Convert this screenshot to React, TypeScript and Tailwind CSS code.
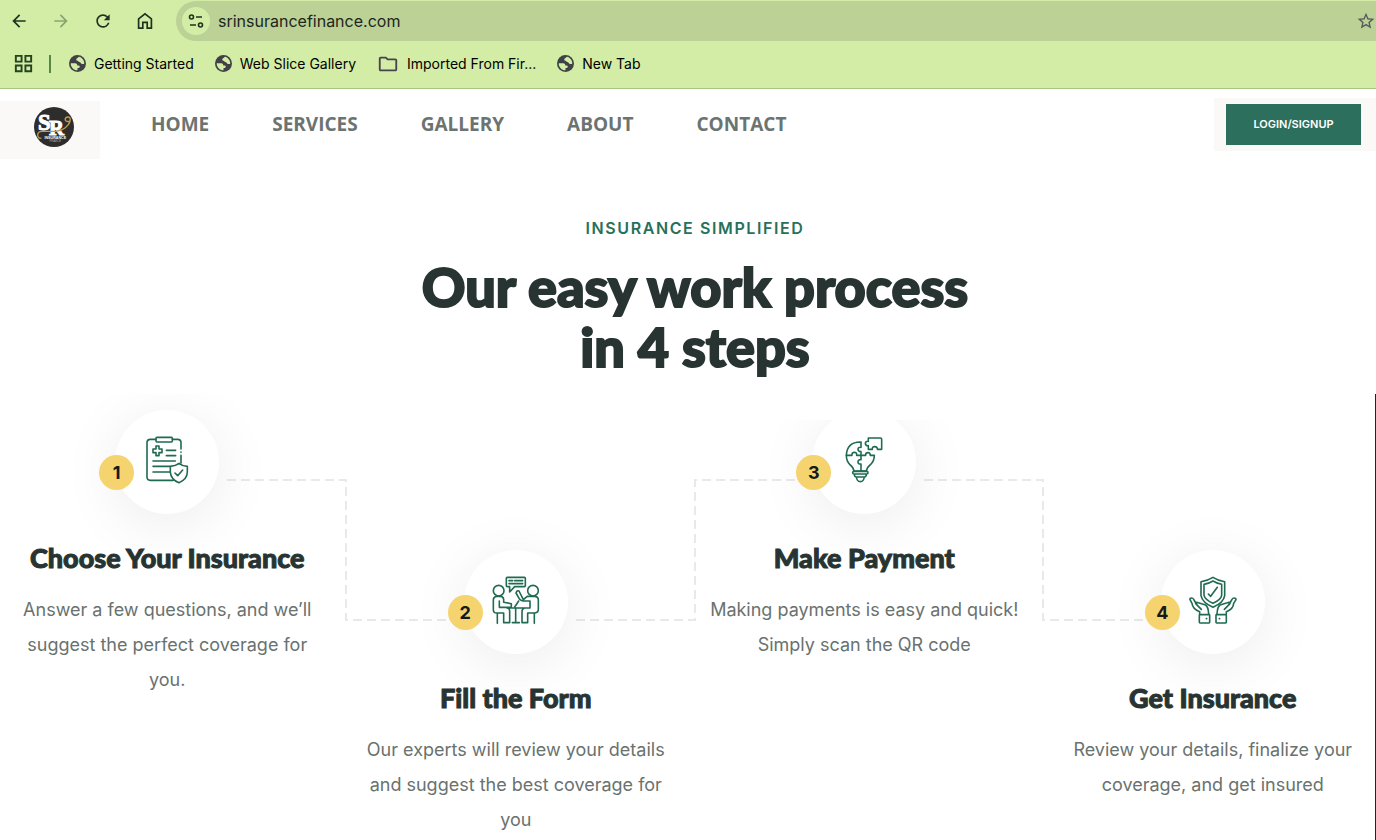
import type { ReactNode } from "react";
import {
  MdArrowBack,
  MdArrowForward,
  MdOutlineFolder,
  MdOutlineGridView,
  MdRefresh,
  MdStarBorder,
} from "react-icons/md";

type Step = {
  number: number;
  title: string;
  text: string;
  icon: ReactNode;
};

const bookmarks = [
  { label: "Getting Started", folder: false },
  { label: "Web Slice Gallery", folder: false },
  { label: "Imported From Fir...", folder: true },
  { label: "New Tab", folder: false },
];

const links = ["HOME", "SERVICES", "GALLERY", "ABOUT", "CONTACT"];

function StepIcon({ viewBox, children }: { viewBox: string; children: ReactNode }) {
  return (
    <svg
      viewBox={viewBox}
      className="size-13 text-[#1f6a51]"
      fill="none"
      stroke="currentColor"
      strokeWidth="4.8"
      strokeLinecap="round"
      strokeLinejoin="round"
      aria-hidden="true"
    >
      {children}
    </svg>
  );
}

function PolicyIcon() {
  return (
    <StepIcon viewBox="184 141 156 156">
      <path d="M228 151H212Q202 151 202 161V264Q202 274 212 274H281" />
      <path d="M278 151H294Q304 151 304 161V180M304 189V190M304 199V222" />
      <rect x="229" y="145" width="49" height="14" rx="3" />
      <path d="M229 171h9v9h9v11h-9v9h-9v-9h-9v-11h9z" />
      <path d="M260 184H288M260 200H288M220 216H287M220 232H270M220 249H270" />
      <path d="M298 223Q309 232 323 232V250Q322 272 298 281Q274 272 272 250V232Q288 231 298 223Z" />
      <path d="M286 252L294 260L309 243" />
    </StepIcon>
  );
}

function MeetingIcon() {
  return (
    <StepIcon viewBox="181 139 156 156">
      <circle cx="207" cy="183" r="16" />
      <circle cx="310" cy="183" r="16" />
      <path d="M233 143H284Q287 143 287 146V168Q287 171 284 171H255L240 187V171H233Q230 171 230 168V146Q230 143 233 143Z" />
      <path d="M238 153H249M255 153H279M238 162H279" />
      <path d="M209 214V233H245V222L222 218V209Q221 200 212 200H201Q191 201 191 212V240Q191 250 201 250H222V279H240V243Q240 235 232 235H245" />
      <path d="M301 235H285Q277 237 277 246V279H294V250H316Q326 249 326 239V210Q325 200 315 200H293L281 210L268 184Q262 181 259 190L270 209Q275 215 284 214H301V235H248" />
      <path d="M255 232L267 214M258 236V279M248 279H269M203 252V281M314 252V281" />
    </StepIcon>
  );
}

function IdeaIcon() {
  return (
    <StepIcon viewBox="177 112 156 156">
      <path d="M246 130Q204 129 202 170Q202 187 212 197Q224 207 225 217H262Q263 207 275 197Q286 187 286 170H274Q273 161 266 162Q259 163 260 170H246V159Q237 159 237 152Q237 145 246 146Z" />
      <path d="M202 170H219Q218 161 226 161Q234 161 233 170H246V183Q237 182 237 190Q237 197 246 196V217" />
      <path d="M268 118H304Q308 118 308 122V152H295Q296 144 287 144Q279 144 280 152H268V141Q260 142 259 134Q260 127 268 128Z" />
      <path d="M225 218H263Q267 218 267 222Q267 226 263 226H225Q221 226 221 222Q221 218 225 218ZM226 226Q226 235 232 235H256Q262 235 262 226M232 235Q234 249 244 249Q254 249 256 235" />
    </StepIcon>
  );
}

function ProtectionIcon() {
  return (
    <StepIcon viewBox="173 139 156 156">
      <path d="M251 143Q266 153 286 156V198Q283 219 251 233Q219 219 215 198V156Q235 153 251 143Z" />
      <path d="M251 154Q264 162 277 164V197Q275 210 251 221Q227 210 224 197V164Q238 162 251 154Z" />
      <path d="M237 193L244 200L264 173" />
      <path d="M211 253V246Q190 238 188 221L182 210Q181 205 187 205Q192 205 194 211L203 226L216 239L199 222Q199 216 207 219L229 226Q237 232 238 253" />
      <path d="M291 253V246Q312 238 313 221L320 210Q320 205 314 205Q309 205 307 211L298 226L285 239L302 222Q302 216 294 219L272 226Q264 232 263 253" />
      <rect x="210" y="255" width="31" height="25" rx="2" />
      <rect x="260" y="255" width="31" height="25" rx="2" />
      <path d="M231 267H232M270 267H271" />
    </StepIcon>
  );
}

const steps: Step[] = [
  {
    number: 1,
    title: "Choose Your Insurance",
    text: "Answer a few questions, and we’ll suggest the perfect coverage for you.",
    icon: <PolicyIcon />,
  },
  {
    number: 2,
    title: "Fill the Form",
    text: "Our experts will review your details and suggest the best coverage for you",
    icon: <MeetingIcon />,
  },
  {
    number: 3,
    title: "Make Payment",
    text: "Making payments is easy and quick! Simply scan the QR code",
    icon: <IdeaIcon />,
  },
  {
    number: 4,
    title: "Get Insurance",
    text: "Review your details, finalize your coverage, and get insured",
    icon: <ProtectionIcon />,
  },
];

function SiteSettingsIcon() {
  return (
    <svg viewBox="0 0 16 16" className="size-4" fill="none" stroke="currentColor" strokeWidth="1.6" aria-hidden="true">
      <circle cx="3.5" cy="4" r="2" />
      <path d="M8 4h6M2 12h6" />
      <circle cx="12.5" cy="12" r="2" />
    </svg>
  );
}

function HomeIcon() {
  return (
    <svg viewBox="0 0 20 20" className="size-5" fill="none" stroke="currentColor" strokeWidth="1.7" aria-hidden="true">
      <path d="M3.6 17.2V7.8L10 2.9l6.4 4.9v9.4h-4.2v-5.8H7.8v5.8z" />
    </svg>
  );
}

function GlobeIcon() {
  return (
    <svg viewBox="0 0 50 50" className="size-[17px]" aria-hidden="true">
      <circle cx="25" cy="25" r="25" fill="#3f4146" />
      <g fill="#d4eda6">
        <path d="M29 5C38 7 45 15 45 25C42 28 38 27 35 24C33 20 27 21 26 17C20 17 20 11 25 9Z" />
        <path d="M5 24H18C23 24 25 27 24 31H29C33 32 33 37 28 38H25V45C14 45 5 36 5 24Z" />
      </g>
    </svg>
  );
}

function BrowserBar() {
  return (
    <div className="border-b border-[#a9c583] bg-[#d4eda6] pt-px font-['Inter',sans-serif] text-[#1c3320]">
      <div className="flex h-10 items-center pl-2">
        <div className="flex gap-5 pr-5">
          <button type="button" aria-label="Back" className="px-px"><MdArrowBack className="size-5" /></button>
          <button type="button" aria-label="Forward" className="px-px text-[#86a56f]"><MdArrowForward className="size-5" /></button>
          <button type="button" aria-label="Reload" className="px-px"><MdRefresh className="size-5" /></button>
          <button type="button" aria-label="Home" className="px-px"><HomeIcon /></button>
        </div>
        <div className="flex h-10 flex-1 items-center rounded-l-full bg-[#bbd196] pl-1.5">
          <button type="button" aria-label="Site settings" className="flex size-7 items-center justify-center rounded-full bg-[#d4eda6]">
            <SiteSettingsIcon />
          </button>
          <input
            type="text"
            aria-label="Address"
            defaultValue="srinsurancefinance.com"
            className="ml-2 min-w-0 flex-1 bg-transparent text-base text-[#20261d] outline-none"
          />
          <button type="button" aria-label="Bookmark this page" className="text-[#55595b]">
            <MdStarBorder className="size-5" />
          </button>
        </div>
      </div>
      <div className="flex h-[47px] items-center pb-0.5 pl-3 text-sm text-black">
        <button type="button" aria-label="Apps" className="text-[#24431f]"><MdOutlineGridView className="size-[23px]" /></button>
        <span className="mx-3.5 h-[18px] w-0.5 bg-[#518a45]" />
        <div className="flex gap-[21px] pl-1">
          {bookmarks.map((item) => (
            <a key={item.label} href="#" className="flex items-center gap-2 whitespace-nowrap">
              {item.folder ? <MdOutlineFolder className="size-[22px] text-[#46444e]" /> : <GlobeIcon />}
              {item.label}
            </a>
          ))}
        </div>
      </div>
    </div>
  );
}

function Logo() {
  return (
    <svg viewBox="0 0 120 120" className="size-10" role="img" aria-label="SR Insurance Finance">
      <circle cx="60" cy="60" r="60" fill="#2e2d2e" />
      <g fill="#fff" fontFamily="Liberation Serif, serif" fontWeight="700" stroke="#fff" strokeWidth="3">
        <text x="12" y="70" fontSize="68">S</text>
        <text x="45" y="83" fontSize="62">R</text>
      </g>
      <path
        d="M22 94C8 94 6 74 24 73C48 72 74 78 94 62C112 48 112 29 102 30C92 31 88 46 107 43"
        fill="none"
        stroke="#c29a4c"
        strokeWidth="4"
      />
      <text x="64" y="97" textAnchor="middle" fontSize="11" fontWeight="700" fill="#fff" fontFamily="Liberation Sans, sans-serif">
        INSURANCE
      </text>
      <text x="64" y="106" textAnchor="middle" fontSize="8" fill="#aaa" fontFamily="Liberation Sans, sans-serif">
        FINANCE
      </text>
    </svg>
  );
}

function SiteHeader() {
  return (
    <header className="flex items-start justify-between pt-2">
      <div className="flex items-start">
        <a href="#" className="mt-1 flex h-[58px] w-[100px] justify-center bg-[#fbf9f8] pt-1.5 pl-2">
          <Logo />
        </a>
        <nav className="flex gap-[63px] pt-[13px] pl-[51px] font-['Open_Sans',sans-serif] text-[19px] leading-7 font-bold text-[#6c7471]">
          {links.map((link) => (
            <a key={link} href="#">{link}</a>
          ))}
        </nav>
      </div>
      <div className="mt-px bg-[#fbf9f8] pt-1.5 pr-[15px] pb-1.5 pl-3">
        <button type="button" className="h-[41px] w-[135px] bg-[#2d6f5d] font-['Inter',sans-serif] text-[11px] font-semibold text-white">
          LOGIN/SIGNUP
        </button>
      </div>
    </header>
  );
}

/* Dashed link to the next step: drops after odd steps, climbs after even ones. */
function Connector({ up }: { up: boolean }) {
  return (
    <svg
      viewBox="0 0 220 144"
      className={`absolute left-1/2 ml-[60px] h-36 w-[220px] ${up ? "-top-[72px]" : "top-[68px]"}`}
      fill="none"
      stroke="#e9e9e9"
      strokeWidth="2"
      strokeDasharray="9 5"
      aria-hidden="true"
    >
      <path d={up ? "M0 142H119V2H220" : "M0 2H119V142H220"} />
    </svg>
  );
}

function StepCard({ step }: { step: Step }) {
  const even = step.number % 2 === 0;

  return (
    <li className={`relative flex flex-col items-center text-center ${even ? "mt-[140px]" : ""}`}>
      {step.number < 4 ? <Connector up={even} /> : null}
      <div className="relative">
        <div className={step.number === 3 ? "[clip-path:inset(10px_-90px_-90px_-90px)]" : ""}>
          <div className="flex size-[104px] items-center justify-center rounded-full bg-white shadow-[0_10px_60px_rgba(0,0,0,0.08)]">
            {step.icon}
          </div>
        </div>
        <span className="absolute top-[45px] -left-4 flex size-[35px] items-center justify-center rounded-full bg-[#f5d36e] font-['Inter',sans-serif] text-lg font-bold text-[#15191a]">
          {step.number}
        </span>
      </div>
      <h3 className="mt-7 font-['Lato',sans-serif] text-[27px] leading-8 font-black text-[#283432] [-webkit-text-stroke:1px_#283432]">
        {step.title}
      </h3>
      <p className="mt-[18px] max-w-[318px] font-['Inter',sans-serif] text-lg leading-[35px] text-[#69726f]">{step.text}</p>
    </li>
  );
}

export default function App() {
  return (
    <div className="flex min-h-screen flex-col bg-white">
      <BrowserBar />
      <SiteHeader />
      <main className="flex flex-1 flex-col">
        <div className="pt-[57px] pr-3.5 pb-[17px] pl-7 text-center">
          <p className="font-['Inter',sans-serif] text-base leading-6 font-semibold tracking-widest text-[#27705a]">
            INSURANCE SIMPLIFIED
          </p>
          <h1 className="mt-[17px] font-['Lato',sans-serif] text-[54px] leading-[60px] font-black text-[#283432] [-webkit-text-stroke:2px_#283432]">
            Our easy work process
            <br />
            in 4 steps
          </h1>
        </div>
        <section className="flex-1 overflow-hidden border-r border-[#222]">
          <ol className="-mr-3 -ml-[7px] grid grid-cols-4 pt-4">
            {steps.map((step) => (
              <StepCard key={step.number} step={step} />
            ))}
          </ol>
        </section>
      </main>
    </div>
  );
}
